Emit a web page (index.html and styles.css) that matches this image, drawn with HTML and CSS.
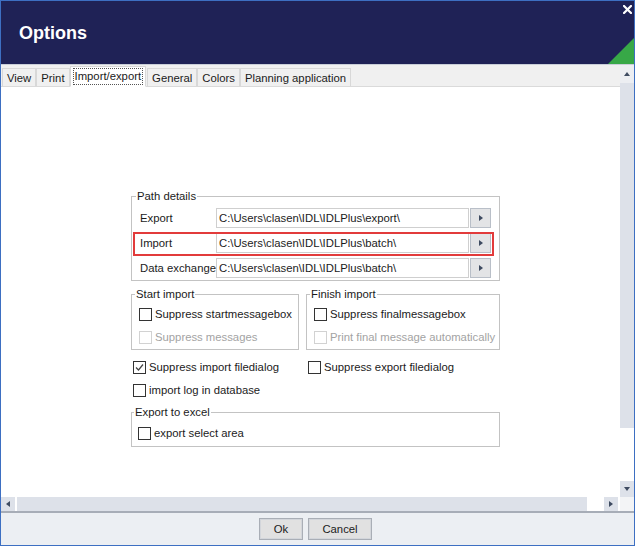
FILE: index.html
```html
<!DOCTYPE html>
<html lang="en">
<head>
    <meta charset="UTF-8">
    <title>Options</title>
    <link rel="stylesheet" href="styles.css">
</head>
<body>
    <div class="window">
        <header class="titlebar">
            <h1>Options</h1>
            <span class="close">
                <svg width="9" height="9" viewBox="0 0 9 9"><path d="M1 1L8 8M8 1L1 8" stroke="#fff" stroke-width="2.2" stroke-linecap="square"/></svg>
            </span>
        </header>

        <div class="scroller">
            <div class="view">
                <nav class="tabs">
                    <span class="tab">View</span>
                    <span class="tab">Print</span>
                    <span class="tab active"><span class="focus">Import/export</span></span>
                    <span class="tab">General</span>
                    <span class="tab">Colors</span>
                    <span class="tab">Planning application</span>
                </nav>

                <div class="page">
                    <form class="options">
                        <fieldset class="group paths">
                            <legend>Path details</legend>
                            <div class="path-row">
                                <span class="path-label">Export</span>
                                <span class="path-field">C:\Users\clasen\IDL\IDLPlus\export\</span>
                                <span class="browse"><i class="tri-right"></i></span>
                            </div>
                            <div class="path-row marked">
                                <span class="path-label">Import</span>
                                <span class="path-field">C:\Users\clasen\IDL\IDLPlus\batch\</span>
                                <span class="browse"><i class="tri-right"></i></span>
                            </div>
                            <div class="path-row">
                                <span class="path-label">Data exchange</span>
                                <span class="path-field">C:\Users\clasen\IDL\IDLPlus\batch\</span>
                                <span class="browse"><i class="tri-right"></i></span>
                            </div>
                        </fieldset>

                        <div class="pair">
                            <fieldset class="group boxes">
                                <legend>Start import</legend>
                                <label class="check"><span class="box"></span>Suppress startmessagebox</label>
                                <label class="check disabled"><span class="box"></span>Suppress messages</label>
                            </fieldset>
                            <fieldset class="group boxes">
                                <legend>Finish import</legend>
                                <label class="check"><span class="box"></span>Suppress finalmessagebox</label>
                                <label class="check disabled"><span class="box"></span>Print final message automatically</label>
                            </fieldset>
                        </div>

                        <div class="pair loose first">
                            <label class="check"><span class="box checked"><svg width="11" height="11" viewBox="0 0 11 11"><path d="M2 5.5L4.5 8L9 2.5" fill="none" stroke="#444" stroke-width="1.2"/></svg></span>Suppress import filedialog</label>
                            <label class="check"><span class="box"></span>Suppress export filedialog</label>
                        </div>

                        <div class="pair loose">
                            <label class="check"><span class="box"></span>import log in database</label>
                        </div>

                        <fieldset class="group excel">
                            <legend>Export to excel</legend>
                            <label class="check"><span class="box"></span>export select area</label>
                        </fieldset>
                    </form>
                </div>
            </div>

            <div class="vbar">
                <span class="arrow up"><i class="tri-up"></i></span>
                <span class="thumb"></span>
                <span class="gap"></span>
                <span class="arrow down"><i class="tri-down"></i></span>
            </div>

            <div class="hbar">
                <span class="arrow"><i class="tri-left"></i></span>
                <span class="thumb"></span>
                <span class="gap"></span>
                <span class="arrow"><i class="tri-right"></i></span>
            </div>

            <div class="corner"></div>
        </div>

        <footer class="buttons">
            <button type="button" class="btn ok">Ok</button>
            <button type="button" class="btn cancel">Cancel</button>
        </footer>
    </div>
</body>
</html>
```

FILE: styles.css
```css
* {
    box-sizing: border-box;
}

body {
    margin: 0;
    font-family: "Liberation Sans", Arial, sans-serif;
    font-size: 11.3px;
    color: #1b1b1b;
    background: #fff;
}

.window {
    width: 635px;
    height: 546px;
    border: 1px solid #3d6fc2;
    display: flex;
    flex-direction: column;
    background: #fff;
}

/* title bar */

.titlebar {
    position: relative;
    flex: none;
    height: 64px;
    background: #1f2256;
    border-bottom: 1px solid #c9ced8;
    display: flex;
    align-items: center;
    padding-left: 18px;
}

.titlebar h1 {
    margin: 2px 0 0;
    font-size: 18px;
    font-weight: bold;
    color: #fff;
}

.titlebar::after {
    content: "";
    position: absolute;
    right: 0;
    bottom: 0;
    width: 26px;
    height: 26px;
    background: #37a847;
    clip-path: polygon(100% 0, 100% 100%, 0 100%);
}

.close {
    position: absolute;
    top: 4px;
    right: 2px;
    width: 9px;
    height: 9px;
    display: flex;
}

/* scroll area */

.scroller {
    flex: 1;
    min-height: 0;
    display: grid;
    grid-template-columns: 1fr 14px;
    grid-template-rows: 1fr 14px;
}

.view {
    overflow: hidden;
    display: flex;
    flex-direction: column;
    background: #fff;
}

.tabs {
    flex: none;
    height: 22px;
    background: #f0f0f0;
    border-bottom: 1px solid #dadada;
    display: flex;
    align-items: flex-end;
    padding-left: 1px;
}

.tab {
    height: 19px;
    margin-bottom: -1px;
    padding: 1px 4px 0;
    line-height: 17px;
    border: 1px solid #d8d8d8;
    border-bottom: 1px solid #dadada;
    background: #f0f0f0;
    white-space: nowrap;
}

.tab.active {
    height: 21px;
    margin-right: 1px;
    padding: 1px 2px 0;
    line-height: 15px;
    background: #fff;
    border-bottom-color: #fff;
}

.focus {
    display: block;
    padding: 0 1px;
    border: 1px dotted #555;
}

.page {
    flex: 1;
    padding: 102px 0 0 130px;
}

.options {
    width: 369px;
}

/* groups */

.group {
    margin: 0;
    min-width: 0;
    border: 1px solid #c3c3c3;
}

.group legend {
    margin-left: -4px;
    padding: 0 1px;
    line-height: 14px;
}

.paths {
    padding: 5px 8px 2px;
    display: flex;
    flex-direction: column;
    gap: 5px;
}

.path-row {
    position: relative;
    height: 20px;
    display: flex;
    align-items: center;
}

.path-row.marked::after {
    content: "";
    position: absolute;
    top: -1px;
    bottom: -3px;
    left: -7px;
    right: -3px;
    border: 2px solid #e23b3b;
}

.path-label {
    width: 76px;
    white-space: nowrap;
}

.path-field {
    width: 253px;
    height: 20px;
    padding-left: 2px;
    line-height: 18px;
    border: 1px solid #cfcfcf;
    background: #fff;
    white-space: nowrap;
}

.browse {
    width: 21px;
    height: 20px;
    margin-left: 1px;
    border: 1px solid #b9bfc8;
    background: #e3e4e6;
    display: flex;
    justify-content: center;
    align-items: center;
}

.pair {
    display: grid;
    grid-template-columns: 168px 194px;
    column-gap: 7px;
    margin-top: 6px;
}

.boxes {
    padding: 4px 7px 3px;
    display: flex;
    flex-direction: column;
    gap: 5px;
}

.loose {
    margin-top: 5px;
}

.loose.first {
    margin-top: 8px;
}

.loose .check {
    padding-left: 2px;
}

.excel {
    margin-top: 6px;
    padding: 5px 6px 4px;
}

/* checkboxes */

.check {
    height: 18px;
    display: flex;
    align-items: center;
    gap: 3px;
    white-space: nowrap;
}

.box {
    flex: none;
    width: 13px;
    height: 13px;
    border: 1px solid #333;
    background: #fff;
    display: flex;
    justify-content: center;
    align-items: center;
}

.check.disabled {
    color: #a3a3a3;
}

.check.disabled .box {
    border-color: #d2d2d2;
}

/* scroll bars */

.vbar {
    display: flex;
    flex-direction: column;
    background: #fff;
}

.vbar .arrow {
    flex: none;
    height: 18px;
    background: #eceef2;
    display: flex;
    justify-content: center;
    align-items: center;
}

.vbar .arrow.down {
    height: 16px;
    background: #dde1e9;
}

.vbar .thumb {
    height: 345px;
    background: #dde1e9;
}

.gap {
    flex: 1;
}

.hbar {
    display: flex;
    background: #fff;
    padding-right: 2px;
}

.hbar .arrow {
    width: 14px;
    background: #dde1e9;
    display: flex;
    justify-content: center;
    align-items: center;
}

.hbar .thumb {
    width: 570px;
    margin-left: 2px;
    background: #dde1e9;
}

.corner {
    background: #f3f4f6;
}

.tri-right, .tri-left, .tri-up, .tri-down {
    width: 0;
    height: 0;
    border: 3.5px solid transparent;
}

.tri-right {
    border-left: 4px solid #3e4b61;
    border-right: 0;
}

.tri-left {
    border-right: 4px solid #3e4b61;
    border-left: 0;
}

.tri-up {
    border-bottom: 4px solid #3e4b61;
    border-top: 0;
}

.tri-down {
    border-top: 4px solid #3e4b61;
    border-bottom: 0;
}

/* footer */

.buttons {
    flex: none;
    height: 34px;
    border-top: 2px solid #a7adb7;
    background: #eceff3;
    display: flex;
    justify-content: center;
    align-items: center;
    gap: 5px;
    padding-right: 4px;
}

.btn {
    height: 22px;
    padding: 0;
    font-family: inherit;
    font-size: 11.3px;
    color: #1b1b1b;
    background: #e1e1e1;
    border: 1px solid #a9aeb6;
    box-shadow: inset 0 0 0 1px #d3d6db;
}

.btn.ok {
    width: 44px;
}

.btn.cancel {
    width: 64px;
}
```
